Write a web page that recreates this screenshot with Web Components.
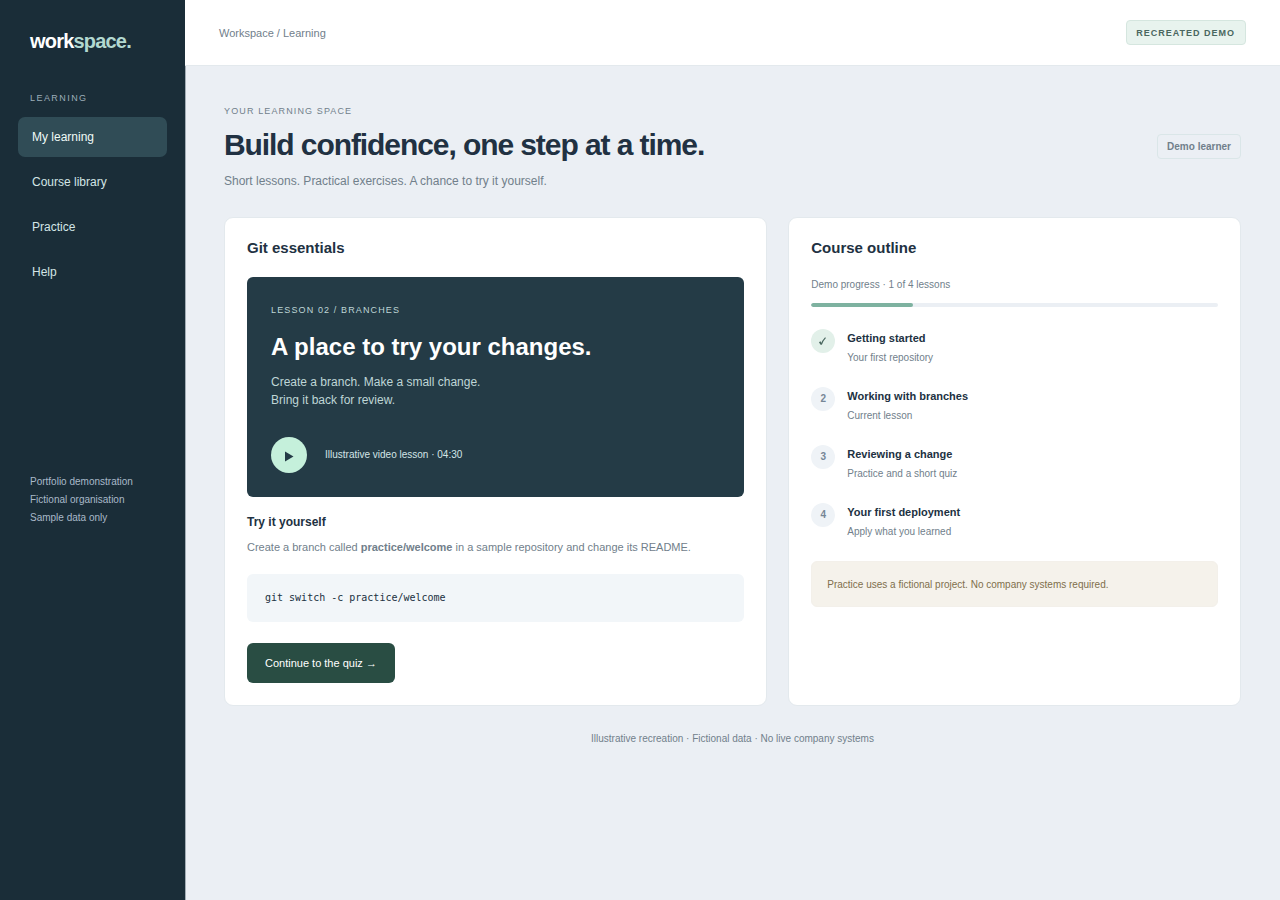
<!DOCTYPE html>
<html lang="en">
<head>
<meta charset="utf-8">
<meta name="viewport" content="width=device-width, initial-scale=1">
<title>Workspace – My learning</title>
<style>
  :root {
    --ink: #213142;
    --muted: #71808b;
    --line: #e3e9ed;
    --canvas: #ebeff4;
    --navy: #1a2d38;
    --hero: #243b46;
    --mint: #c5f0db;
  }
  body {
    margin: 0;
    background: var(--canvas);
    color: var(--ink);
    font: 12px/18px "Liberation Sans", Arial, sans-serif;
  }
</style>
</head>
<body>
<learning-app></learning-app>

<script>
  const define = (name, html) => {
    const template = document.createElement('template');
    template.innerHTML = html;
    customElements.define(name, class extends HTMLElement {
      constructor() {
        super();
        this.attachShadow({ mode: 'open' }).append(template.content.cloneNode(true));
      }
    });
  };

  define('side-link', `
    <style>
      :host { display: block; }
      a {
        display: block; padding: 11px 14px; border-radius: 7px;
        color: #d3e5e6; text-decoration: none;
      }
      :host([current]) a { background: #304c56; color: #effaf6; }
    </style>
    <a href="#"><slot></slot></a>`);

  define('side-bar', `
    <style>
      :host { display: block; box-sizing: border-box; padding: 29px 18px; background: var(--navy); }
      .logo { margin: 0 12px; font-size: 20px; line-height: 24px; font-weight: bold; letter-spacing: -0.04em; color: #fff; }
      .logo span { color: #b2d8d0; }
      h2 { margin: 36px 12px 10px; font-size: 9px; line-height: 18px; font-weight: normal; letter-spacing: 0.16em; color: #9dadb8; }
      nav { display: grid; gap: 5px; }
      .notes { margin: 181px 12px 0; font-size: 10px; color: #a9b9c9; }
      p { margin: 0; }
    </style>
    <div class="logo">work<span>space.</span></div>
    <h2>LEARNING</h2>
    <nav aria-label="Learning">
      <side-link current>My learning</side-link>
      <side-link>Course library</side-link>
      <side-link>Practice</side-link>
      <side-link>Help</side-link>
    </nav>
    <div class="notes">
      <p>Portfolio demonstration</p>
      <p>Fictional organisation</p>
      <p>Sample data only</p>
    </div>`);

  define('top-bar', `
    <style>
      :host {
        display: flex; align-items: center; justify-content: space-between;
        padding: 20px 34px; background: #fff; border-bottom: 1px solid var(--line);
      }
      .crumbs { font-size: 11px; color: var(--muted); }
      .badge {
        padding: 3px 10px 2px 9px; border: 1px solid #d5e6df; border-radius: 4px; background: #e8f3ee;
        font-size: 9px; font-weight: bold; letter-spacing: 1px; color: #4a675f;
      }
    </style>
    <div class="crumbs">Workspace / Learning</div>
    <div class="badge">RECREATED DEMO</div>`);

  define('page-head', `
    <style>
      :host { display: flex; align-items: center; justify-content: space-between; }
      .eyebrow { font-size: 9px; line-height: 16px; letter-spacing: 0.125em; color: var(--muted); }
      h1 { margin: 8px 0 9px; font-size: 30px; line-height: 36px; letter-spacing: -0.036em; }
      p { margin: 0; color: var(--muted); }
      .chip {
        padding: 3px 9px 2px; border: 1px solid #dae6e8; border-radius: 4px;
        font-size: 10px; font-weight: bold; color: var(--muted);
      }
    </style>
    <div>
      <div class="eyebrow">YOUR LEARNING SPACE</div>
      <h1>Build confidence, one step at a time.</h1>
      <p>Short lessons. Practical exercises. A chance to try it yourself.</p>
    </div>
    <div class="chip">Demo learner</div>`);

  define('panel-card', `
    <style>
      :host { display: block; padding: 22px; border: 1px solid var(--line); border-radius: 9px; background: #fff; }
      h2 { margin: 0 0 22px; font-size: 15px; line-height: 15px; }
    </style>
    <h2><slot name="title"></slot></h2>
    <slot></slot>`);

  define('lesson-hero', `
    <style>
      :host { display: block; padding: 24px; border-radius: 6px; background: var(--hero); color: #bfd6d6; }
      .eyebrow { font-size: 9px; letter-spacing: 0.125em; }
      h3 { margin: 14px 0 12px; font-size: 24px; line-height: 28px; color: #fff; }
      p { margin: 0; }
      .player { display: flex; align-items: center; gap: 18px; margin-top: 28px; font-size: 10px; color: #d3e5e6; }
      button { width: 36px; height: 36px; padding: 0; border: 0; border-radius: 50%; background: var(--mint); }
      svg { display: block; width: 36px; height: 36px; fill: var(--hero); }
    </style>
    <div class="eyebrow">LESSON 02 / BRANCHES</div>
    <h3>A place to try your changes.</h3>
    <p>Create a branch. Make a small change.<br>Bring it back for review.</p>
    <div class="player">
      <button type="button" aria-label="Play lesson"><svg viewBox="0 0 36 36"><path d="M14 14.5v10l8.5-5z"/></svg></button>
      <span>Illustrative video lesson · 04:30</span>
    </div>`);

  define('try-it', `
    <style>
      :host { display: block; margin-top: 16px; }
      h3 { margin: 0 0 7px; font-size: 12px; }
      p { margin: 0 0 18px; font-size: 11px; color: var(--muted); }
      pre { margin: 0 0 21px; padding: 15px 18px; border-radius: 6px; background: #f2f6f9; font: 10px/18px "DejaVu Sans Mono", monospace; }
      code { font: inherit; }
      button {
        display: block; padding: 11px 18px; border: 0; border-radius: 6px; background: #294d43;
        font: 11px/18px "Liberation Sans", Arial, sans-serif; color: #fff;
      }
    </style>
    <h3>Try it yourself</h3>
    <p>Create a branch called <strong>practice/welcome</strong> in a sample repository and change its README.</p>
    <pre><code>git switch -c practice/welcome</code></pre>
    <button type="button">Continue to the quiz →</button>`);

  define('outline-step', `
    <style>
      :host { display: flex; gap: 12px; }
      .mark {
        display: grid; place-items: center; flex: none; width: 24px; height: 24px; border-radius: 50%;
        background: #eff3f7; font-size: 10px; font-weight: bold; color: #768696;
      }
      :host([done]) .mark { background: #e2f0e9; color: #4a675f; }
      h3 { margin: 0 0 2px; font-size: 11px; }
      p { margin: 0; font-size: 10px; color: var(--muted); }
    </style>
    <div class="mark"><slot name="mark"></slot></div>
    <div><h3><slot name="title"></slot></h3><p><slot></slot></p></div>`);

  define('course-outline', `
    <style>
      :host { display: block; font-size: 10px; }
      label { display: block; line-height: 16px; color: var(--muted); }
      progress {
        display: block; width: 100%; height: 4px; margin: 10px 0 22px;
        appearance: none; border: 0; border-radius: 2px; background: #ebeff4; overflow: hidden;
      }
      progress::-webkit-progress-bar { background: #ebeff4; }
      progress::-webkit-progress-value { background: #7eb2a0; border-radius: 2px; }
      .steps { display: grid; gap: 20px; }
      svg { display: block; width: 24px; height: 24px; fill: none; stroke: currentColor; }
      .note { margin: 20px 0 0; padding: 16px 15px 14px; border: 1px solid #f3f0ea; border-radius: 6px; background: #f5f2eb; line-height: 14px; color: #806f4c; }
    </style>
    <label for="done">Demo progress · 1 of 4 lessons</label>
    <progress id="done" value="1" max="4"></progress>
    <div class="steps">
      <outline-step done>
        <svg slot="mark" viewBox="0 0 24 24"><path d="M8.700 12.700l1.600 2.600" stroke-width="1.800"/><path d="M10.300 15.700c.8-2.700 2.200-5 4.200-7" stroke-width="1.200"/></svg>
        <span slot="title">Getting started</span>Your first repository
      </outline-step>
      <outline-step><span slot="mark">2</span><span slot="title">Working with branches</span>Current lesson</outline-step>
      <outline-step><span slot="mark">3</span><span slot="title">Reviewing a change</span>Practice and a short quiz</outline-step>
      <outline-step><span slot="mark">4</span><span slot="title">Your first deployment</span>Apply what you learned</outline-step>
    </div>
    <p class="note">Practice uses a fictional project. No company systems required.</p>`);

  define('learning-app', `
    <style>
      :host { display: grid; grid-template-columns: 185px 1fr; min-height: 100vh; }
      .page { display: flex; flex-direction: column; min-width: 0; }
      main { flex: 1; padding: 37px 39px 37px 38px; border-left: 1px solid #a3adb5; }
      .cards { display: grid; grid-template-columns: 6fr 5fr; gap: 21px; margin-top: 27px; }
      footer { margin-top: 25px; text-align: center; font-size: 10px; line-height: 16px; color: var(--muted); }
    </style>
    <side-bar></side-bar>
    <div class="page">
      <top-bar></top-bar>
      <main>
        <page-head></page-head>
        <div class="cards">
          <panel-card>
            <span slot="title">Git essentials</span>
            <lesson-hero></lesson-hero>
            <try-it></try-it>
          </panel-card>
          <panel-card>
            <span slot="title">Course outline</span>
            <course-outline></course-outline>
          </panel-card>
        </div>
        <footer>Illustrative recreation · Fictional data · No live company systems</footer>
      </main>
    </div>`);
</script>
</body>
</html>
